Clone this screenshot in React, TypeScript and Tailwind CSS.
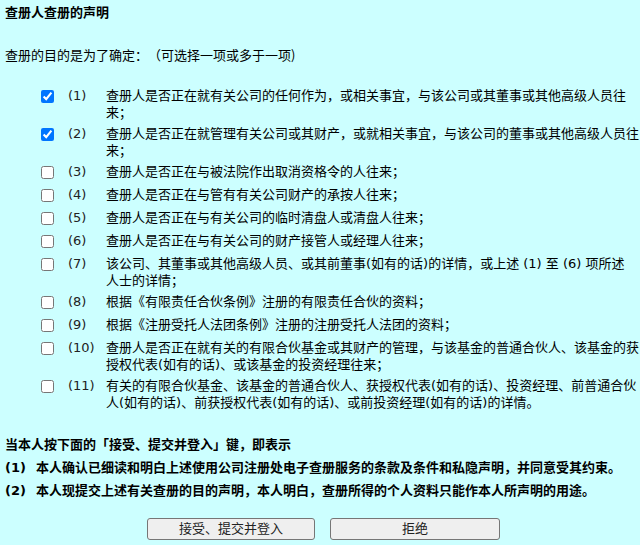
import React from "react";

// text may carry a "\n" where the original page broke the line
const items = [
  { no: "(1)", checked: true, text: "查册人是否正在就有关公司的任何作为，或相关事宜，与该公司或其董事或其他高级人员往来；" },
  { no: "(2)", checked: true, text: "查册人是否正在就管理有关公司或其财产，或就相关事宜，与该公司的董事或其他高级人员往来；" },
  { no: "(3)", checked: false, text: "查册人是否正在与被法院作出取消资格令的人往来；" },
  { no: "(4)", checked: false, text: "查册人是否正在与管有有关公司财产的承按人往来；" },
  { no: "(5)", checked: false, text: "查册人是否正在与有关公司的临时清盘人或清盘人往来；" },
  { no: "(6)", checked: false, text: "查册人是否正在与有关公司的财产接管人或经理人往来；" },
  { no: "(7)", checked: false, text: "该公司、其董事或其他高级人员、或其前董事(如有的话)的详情，或上述 (1) 至 (6) 项所述\n人士的详情；" },
  { no: "(8)", checked: false, text: "根据《有限责任合伙条例》注册的有限责任合伙的资料；" },
  { no: "(9)", checked: false, text: "根据《注册受托人法团条例》注册的注册受托人法团的资料；" },
  { no: "(10)", checked: false, text: "查册人是否正在就有关的有限合伙基金或其财产的管理，与该基金的普通合伙人、该基金的获授权代表(如有的话)、或该基金的投资经理往来；" },
  { no: "(11)", checked: false, text: "有关的有限合伙基金、该基金的普通合伙人、获授权代表(如有的话)、投资经理、前普通合伙人(如有的话)、前获授权代表(如有的话)、或前投资经理(如有的话)的详情。" },
];

const notes = [
  { no: "(1)", text: "本人确认已细读和明白上述使用公司注册处电子查册服务的条款及条件和私隐声明，并同意受其约束。" },
  { no: "(2)", text: "本人现提交上述有关查册的目的声明，本人明白，查册所得的个人资料只能作本人所声明的用途。" },
];

export default function App() {
  return (
    <div className="min-h-screen w-full bg-[#ccffff] text-[13px] leading-[17px] text-black font-['DejaVu_Sans','Noto_Sans_CJK_SC',sans-serif] [text-spacing-trim:space-all] pt-[4px]">
      <div className="pl-[5px] font-bold">查册人查册的声明</div>
      <div className="pl-[5px] mt-[25px] font-['Noto_Sans_CJK_SC',sans-serif]">
        查册的目的是为了确定：（可选择一项或多于一项)
      </div>

      <div className="mt-[22px] flex flex-col">
        {items.map((item) => (
          <div key={item.no} className="flex items-start py-[2px] pl-[41px]">
            <div className="w-[27px] shrink-0">
              <input
                type="checkbox"
                defaultChecked={item.checked}
                className="m-0 my-[3px] block w-[13px] h-[13px] accent-[#0075ff]"
              />
            </div>
            <div className="w-[38px] shrink-0 text-[#222]">{item.no}</div>
            <div className="flex-1 min-w-0 whitespace-pre-line">{item.text}</div>
          </div>
        ))}
      </div>

      <div className="mt-[20px] pl-[5px] font-bold leading-[23px]">
        <div>当本人按下面的「接受、提交并登入」键，即表示</div>
        {notes.map((n) => (
          <div key={n.no} className="flex">
            <span className="w-[31px] shrink-0">{n.no}</span>
            <span>{n.text}</span>
          </div>
        ))}
      </div>

      <div className="mt-[16px] flex gap-[15px] pl-[147px]">
        <button className="w-[168px] h-[22px] bg-[#efefef] border border-[#767676] rounded-[3px] text-[13px] leading-[20px] text-[#222]">
          接受、提交并登入
        </button>
        <button className="w-[170px] h-[22px] bg-[#efefef] border border-[#767676] rounded-[3px] text-[13px] leading-[20px] text-[#222]">
          拒绝
        </button>
      </div>
    </div>
  );
}
